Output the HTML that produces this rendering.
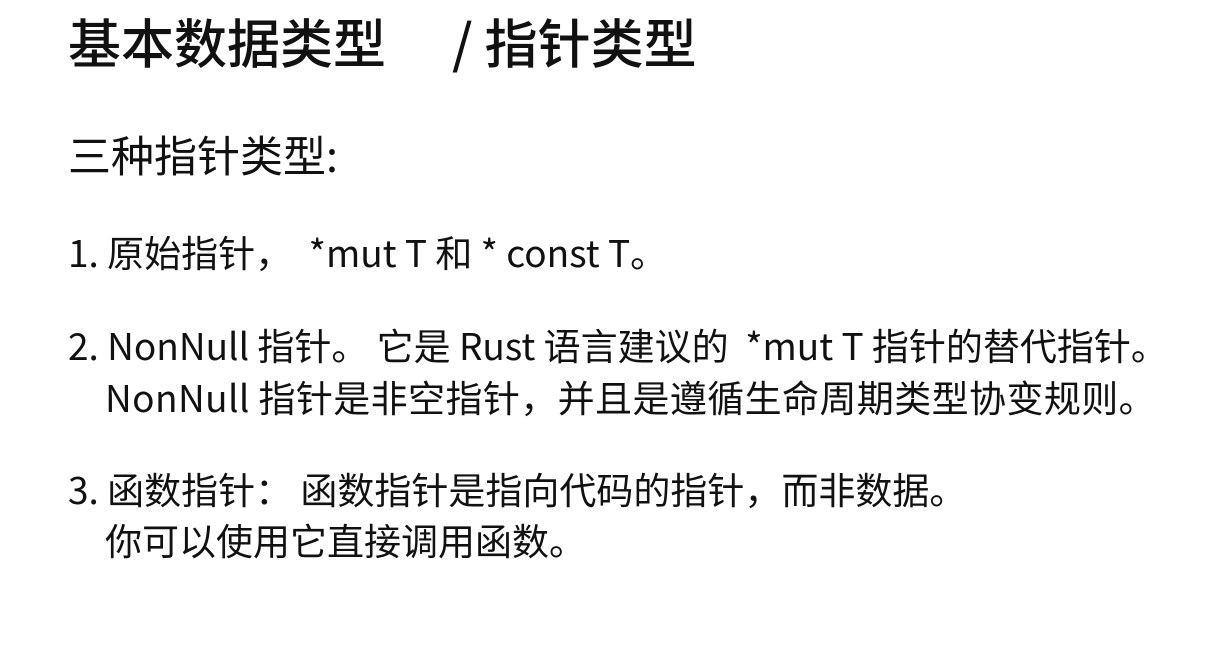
<!DOCTYPE html>
<html><head><meta charset="utf-8"><style>
body{margin:0;width:1214px;height:646px;background:#fff;position:relative;overflow:hidden;font-family:"Noto Sans CJK SC","Liberation Sans",sans-serif;color:#111;font-weight:400}
div{position:absolute;white-space:pre;line-height:1}
.t{font-size:53px;top:15px;font-weight:500}
.h{font-size:43px;top:133px;left:68px;font-weight:400}
.l{font-size:37px}
</style></head><body>
<div class="t" style="left:68px">基本数据类型</div>
<div class="t" style="left:452px">/ 指针类型</div>
<div class="h">三种指针类型:</div>
<div class="l" style="left:68px;top:233px">1. 原始指针，  *mut T 和 * const T。</div>
<div class="l" style="left:68px;top:326px">2. NonNull 指针。 它是 Rust 语言建议的  *mut T 指针的替代指针。</div>
<div class="l" style="left:105px;top:378px;letter-spacing:0.4px">NonNull 指针是非空指针，并且是遵循生命周期类型协变规则。</div>
<div class="l" style="left:68px;top:470px">3. 函数指针： 函数指针是指向代码的指针，而非数据。</div>
<div class="l" style="left:105px;top:521px">你可以使用它直接调用函数。</div>
</body></html>
